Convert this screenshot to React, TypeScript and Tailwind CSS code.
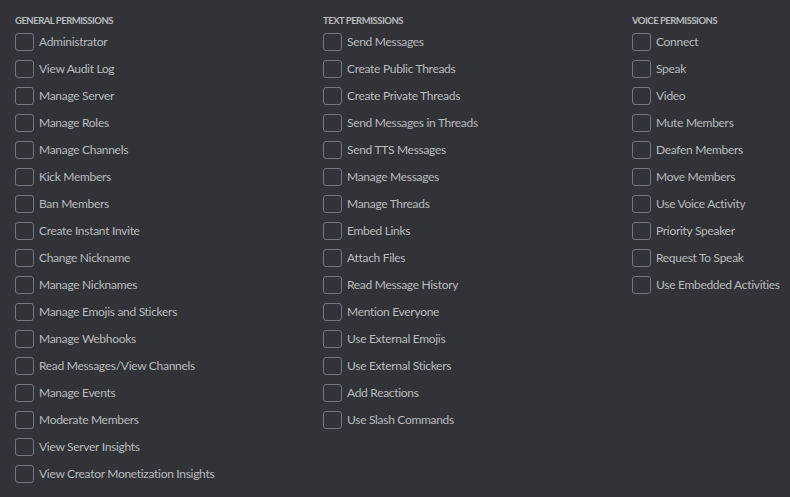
import React from "react";

const general = [
  "Administrator",
  "View Audit Log",
  "Manage Server",
  "Manage Roles",
  "Manage Channels",
  "Kick Members",
  "Ban Members",
  "Create Instant Invite",
  "Change Nickname",
  "Manage Nicknames",
  "Manage Emojis and Stickers",
  "Manage Webhooks",
  "Read Messages/View Channels",
  "Manage Events",
  "Moderate Members",
  "View Server Insights",
  "View Creator Monetization Insights",
];

const text = [
  "Send Messages",
  "Create Public Threads",
  "Create Private Threads",
  "Send Messages in Threads",
  "Send TTS Messages",
  "Manage Messages",
  "Manage Threads",
  "Embed Links",
  "Attach Files",
  "Read Message History",
  "Mention Everyone",
  "Use External Emojis",
  "Use External Stickers",
  "Add Reactions",
  "Use Slash Commands",
];

const voice = [
  "Connect",
  "Speak",
  "Video",
  "Mute Members",
  "Deafen Members",
  "Move Members",
  "Use Voice Activity",
  "Priority Speaker",
  "Request To Speak",
  "Use Embedded Activities",
];

function Column({ title, items }: { title: string; items: string[] }) {
  return (
    <div className="flex flex-col">
      <div className="h-[12px] text-[9.5px] leading-[12px] font-bold uppercase tracking-[-0.5px] text-[#b9bbbe]">
        {title}
      </div>
      <div className="mt-[1px] flex flex-col">
        {items.map((it) => (
          <label key={it} className="flex h-[27px] items-center">
            <span className="box-border h-[18px] w-[19px] shrink-0 rounded-[3px] border border-[#72767d]" />
            <span className="ml-[5px] text-[12px] tracking-[-0.3px] text-[#b9bbbe] whitespace-nowrap">{it}</span>
          </label>
        ))}
      </div>
    </div>
  );
}

export default function App() {
  return (
    <div
      className="h-[497px] w-[790px] overflow-hidden bg-[#313338] pl-[15px] pt-[15px]"
      style={{ fontFamily: 'Lato, "Noto Sans", sans-serif' }}
    >
      <div className="grid grid-cols-[308px_309px_1fr]">
        <Column title="General Permissions" items={general} />
        <Column title="Text Permissions" items={text} />
        <Column title="Voice Permissions" items={voice} />
      </div>
    </div>
  );
}
